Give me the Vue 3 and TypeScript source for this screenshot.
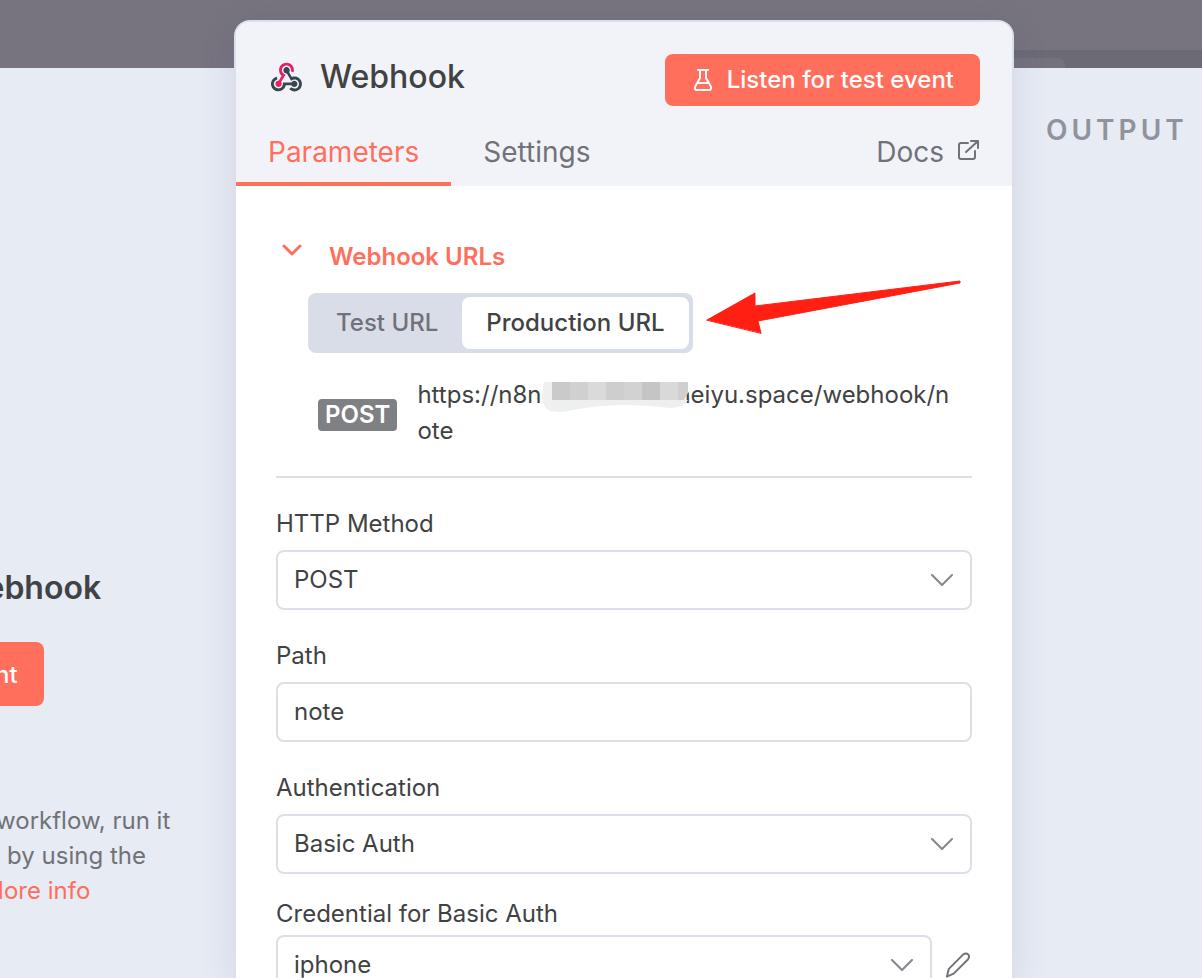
<script setup lang="ts">
import { ref } from 'vue'

type UrlKind = 'test' | 'production'

const urlKind = ref<UrlKind>('production')
const urlOptions: { value: UrlKind; label: string }[] = [
  { value: 'test', label: 'Test URL' },
  { value: 'production', label: 'Production URL' },
]

const activeTab = ref('Parameters')
const tabs = ['Parameters', 'Settings']

const method = ref('POST')
const path = ref('note')
const auth = ref('Basic Auth')
const credential = ref('iphone')
</script>

<template>
  <div class="page">
    <div class="backdrop">
      <div class="canvas-strip"><span class="canvas-tab"></span></div>
    </div>

    <aside class="input-panel">
      <div class="trigger">
        <h2>Pull in events from Webhook</h2>
        <button type="button" class="primary large">
          <svg class="flask" viewBox="0 0 20 24" aria-hidden="true">
            <path d="M5 2h10M7 2v8L2.300 18.300C1.200 20.300 2.200 22 4.300 22h11.400c2.100 0 3.100-1.700 2-3.700L13 10V2M5 15h10" />
          </svg>
          Listen for test event
        </button>
        <p>
          Once you’ve finished building your workflow, run it<br />
          without having to click this button by using the<br />
          production webhook URL. <a href="#">More info</a>
        </p>
      </div>
    </aside>

    <main class="modal">
      <header class="head">
        <div class="title-row">
          <svg class="logo" viewBox="0 0 256 239" aria-hidden="true">
            <path fill="#ea1e63" d="M119.54 100.503c-10.61 17.836-20.775 35.108-31.152 52.25-2.665 4.401-3.984 7.986-1.855 13.58 5.878 15.454-2.414 30.493-17.998 34.575-14.697 3.851-29.016-5.808-31.932-21.543-2.584-13.927 8.224-27.58 23.58-29.757 1.286-.184 2.6-.205 4.762-.367l23.358-39.168C73.612 95.465 64.868 78.39 66.803 57.23c1.368-14.957 7.25-27.883 18-38.477 20.59-20.288 52.002-23.573 76.246-8.001 23.284 14.958 33.948 44.094 24.858 69.031-6.854-1.858-13.756-3.732-21.343-5.79 2.854-13.865.743-26.315-8.608-36.981-6.178-7.042-14.106-10.733-23.12-12.093-18.072-2.73-35.815 8.88-41.08 26.618-5.976 20.13 3.069 36.575 27.784 48.967z" />
            <path fill="#37474f" d="M149.841 79.41c7.475 13.187 15.065 26.573 22.587 39.836 38.02-11.763 66.686 9.284 76.97 31.817 12.422 27.219 3.93 59.457-20.465 76.25-25.04 17.238-56.707 14.293-78.892-7.851 5.654-4.733 11.336-9.487 17.407-14.566 21.912 14.192 41.077 13.524 55.305-3.282 12.133-14.337 11.87-35.714-.615-49.75-14.408-16.197-33.707-16.691-57.035-1.143-9.677-17.168-19.522-34.199-28.893-51.491-3.16-5.828-6.648-9.21-13.77-10.443-11.893-2.062-19.571-12.275-20.032-23.717-.453-11.316 6.214-21.545 16.634-25.53 10.322-3.949 22.435-.762 29.378 8.014 5.674 7.17 7.477 15.24 4.491 24.083-.83 2.466-1.905 4.852-3.07 7.774z" />
            <path fill="#37474f" d="M167.707 187.21h-45.77c-4.387 18.044-13.863 32.612-30.19 41.876-12.693 7.2-26.373 9.641-40.933 7.29-26.808-4.323-48.728-28.456-50.658-55.63-2.184-30.784 18.975-58.147 47.178-64.293 1.947 7.071 3.915 14.21 5.862 21.264-25.876 13.202-34.832 29.836-27.59 50.636 6.375 18.304 24.484 28.337 44.147 24.457 20.08-3.962 30.204-20.65 28.968-47.432 19.036 0 38.088-.197 57.126.097 7.434.117 13.173-.654 18.773-7.208 9.22-10.784 26.191-9.811 36.121.374 10.148 10.409 9.662 27.157-1.077 37.127-10.361 9.62-26.73 9.106-36.424-1.26-1.992-2.136-3.562-4.673-5.533-7.298z" />
          </svg>
          <h1>Webhook</h1>
          <button type="button" class="primary">
            <svg class="flask" viewBox="0 0 20 24" aria-hidden="true">
              <path d="M5 2h10M7 2v8L2.300 18.300C1.200 20.300 2.200 22 4.300 22h11.400c2.100 0 3.100-1.700 2-3.700L13 10V2M5 15h10" />
            </svg>
            Listen for test event
          </button>
        </div>
        <nav class="tabs">
          <button
            v-for="tab in tabs"
            :key="tab"
            type="button"
            class="tab"
            :class="{ active: activeTab === tab }"
            @click="activeTab = tab"
          >
            {{ tab }}
          </button>
          <a class="tab docs" href="#">
            Docs
            <svg class="external" viewBox="0 0 22 22" aria-hidden="true">
              <path d="M10 4H3a2 2 0 0 0-2 2v12a2 2 0 0 0 2 2h12a2 2 0 0 0 2-2v-6M13 2h7v7M20 2L8 13" />
            </svg>
          </a>
        </nav>
      </header>

      <section class="body">
        <button type="button" class="section-title">
          <svg class="caret" viewBox="0 0 20 12" aria-hidden="true"><path d="M2 2l8 8 8-8" /></svg>
          Webhook URLs
        </button>

        <div class="switch-row">
          <div class="switch">
            <button
              v-for="option in urlOptions"
              :key="option.value"
              type="button"
              :class="{ active: urlKind === option.value }"
              @click="urlKind = option.value"
            >
              {{ option.label }}
            </button>
          </div>
          <svg class="arrow" viewBox="0 0 256 56" aria-hidden="true">
            <path d="M1 40L49 13 49 26 254 1 254 3 52 41 55 53Z" />
          </svg>
        </div>

        <div class="url-row">
          <span class="badge">POST</span>
          <div class="url">https://n8n.<svg class="mosaic" viewBox="0 0 146 30" aria-hidden="true">
              <path fill="#f0f0f0" d="M2 0h8v30q-8-3-10-12Q0 8 2 0z" />
              <path fill="#eeefef" d="M10 18h136q-5 8-18 8-24-3-50-3-30 1-52 6-9 2-16 0z" />
              <path fill="#cacaca" d="M10 0h18v18H10z" />
              <path fill="#d0d0d0" d="M28 0h18v18H28z" />
              <path fill="#dadada" d="M46 0h18v18H46z" />
              <path fill="#cecece" d="M64 0h18v18H64z" />
              <path fill="#d2d2d2" d="M82 0h18v18H82z" />
              <path fill="#c5c5c5" d="M100 0h18v18h-18z" />
              <path fill="#d9d9d9" d="M118 0h18v18h-18z" />
              <path fill="#cfcfcf" d="M136 0h10v11l-4 7h-6z" />
            </svg>heiyu.space/webhook/note</div>
        </div>

        <hr />

        <div class="field">
          <label for="method">HTTP Method</label>
          <div class="control">
            <select id="method" v-model="method">
              <option>POST</option>
            </select>
            <svg class="chevron" viewBox="0 0 22 12" aria-hidden="true"><path d="M1 1l10 10L21 1" /></svg>
          </div>
        </div>

        <div class="field">
          <label for="path">Path</label>
          <div class="control"><input id="path" v-model="path" type="text" /></div>
        </div>

        <div class="field">
          <label for="auth">Authentication</label>
          <div class="control">
            <select id="auth" v-model="auth">
              <option>Basic Auth</option>
            </select>
            <svg class="chevron" viewBox="0 0 22 12" aria-hidden="true"><path d="M1 1l10 10L21 1" /></svg>
          </div>
        </div>

        <div class="field credential">
          <label for="credential">Credential for Basic Auth</label>
          <div class="credential-row">
            <div class="control">
              <select id="credential" v-model="credential">
                <option>iphone</option>
              </select>
              <svg class="chevron" viewBox="0 0 22 12" aria-hidden="true"><path d="M1 1l10 10L21 1" /></svg>
            </div>
            <button type="button" class="edit" aria-label="Edit credential">
              <svg viewBox="0 0 28 28" aria-hidden="true">
                <path d="M2 26l2-8L19 3q3-2 5 0t0 5L9 23z" />
              </svg>
            </button>
          </div>
        </div>
      </section>
    </main>

    <aside class="output-panel"><h2>OUTPUT</h2></aside>
  </div>
</template>

<style>
body {
  margin: 0;
}
</style>

<style scoped>
.page {
  --accent: #ff6f5c;
  --line: #dbdfe9;
  --panel: #e6ebf4;
  --dark: #414244;
  --mid: #717277;
  display: grid;
  grid-template-columns: minmax(0, 234fr) minmax(0, 780fr) minmax(0, 188fr);
  grid-template-rows: 68px minmax(0, 1fr);
  height: 100vh;
  overflow: hidden;
  background: var(--panel);
  color: var(--dark);
  font: 24px/36px Inter, "Liberation Sans", sans-serif;
}
.page * {
  box-sizing: border-box;
}
h1,
h2,
p {
  margin: 0;
}
button,
input,
select {
  margin: 0;
  border: 0;
  background: none;
  color: inherit;
  font: inherit;
}
a {
  color: var(--accent);
  text-decoration: none;
}
svg {
  flex: none;
  fill: none;
  stroke-linecap: round;
  stroke-linejoin: round;
}

.backdrop {
  display: flex;
  grid-area: 1 / 1 / 2 / 4;
  align-items: flex-end;
  justify-content: flex-end;
  background: #77747f;
}
.canvas-strip {
  display: flex;
  align-items: flex-end;
  width: 16%;
  height: 18px;
  background: #6b6a75;
}
.canvas-tab {
  width: 55px;
  height: 10px;
  border-radius: 0 8px 0 0;
  background: #74727d;
}

.input-panel {
  display: flex;
  grid-area: 2 / 1;
  justify-content: flex-end;
  padding: 500px 31px 0 0;
  overflow: hidden;
}
.trigger {
  display: flex;
  flex: none;
  flex-direction: column;
  align-items: center;
  width: 640px;
  color: var(--mid);
  line-height: 35px;
  text-align: center;
}
.trigger h2 {
  padding-right: 4px;
  color: var(--dark);
  font-size: 32px;
  font-weight: 600;
  line-height: 40px;
}
.trigger .large {
  height: 64px;
  margin: 34px 0 97px;
  padding-left: 32px;
}
.trigger a {
  margin-left: 6px;
}

.primary {
  display: flex;
  align-items: center;
  gap: 14px;
  height: 52px;
  padding: 0 26px;
  border-radius: 8px;
  background: var(--accent);
  color: #fff;
  font-weight: 500;
  white-space: nowrap;
}

.modal {
  position: relative;
  grid-area: 1 / 2 / 3 / 3;
  margin-top: 20px;
  overflow: hidden;
  border: 2px solid var(--line);
  border-bottom: 0;
  border-radius: 16px 16px 0 0;
  background: #fff;
  box-shadow: 0 8px 36px rgba(60, 66, 100, 0.12);
}
.head {
  background: #f2f3f9;
}
.title-row {
  display: flex;
  align-items: center;
  padding: 32px 32px 0 35px;
}
.logo {
  width: 31px;
  height: 30px;
  margin-bottom: 6px;
}
.title-row h1 {
  margin: 0 auto 6px 18px;
  font-size: 32px;
  font-weight: 500;
  line-height: 40px;
}
.flask {
  width: 20px;
  height: 24px;
  margin-left: 2px;
  stroke: #fff;
  stroke-width: 2;
}
.tabs {
  display: flex;
  height: 80px;
}
.tab {
  display: flex;
  align-items: center;
  padding: 16px 32px 0;
  border-bottom: 4px solid transparent;
  color: var(--mid);
  font-size: 28px;
  line-height: 36px;
}
.tab.active {
  border-color: var(--accent);
  color: var(--accent);
}
.docs {
  gap: 14px;
  margin-left: auto;
}
.external {
  width: 22px;
  height: 22px;
  margin-bottom: 4px;
  stroke: var(--mid);
  stroke-width: 2;
}

.body {
  padding: 53px 40px 0;
}
.section-title {
  display: flex;
  align-items: center;
  gap: 27px;
  padding: 0 6px;
  color: var(--accent);
  font-weight: 600;
}
.caret {
  width: 20px;
  height: 12px;
  margin-bottom: 14px;
  stroke: var(--accent);
  stroke-width: 3;
}
.switch-row {
  display: flex;
  align-items: flex-start;
  gap: 13px;
  margin: 18px 0 0 32px;
}
.switch {
  display: flex;
  flex: none;
  padding: 4px;
  border-radius: 8px;
  background: #d9dde8;
}
.switch button {
  height: 52px;
  padding: 0 24px;
  border-radius: 8px;
  color: var(--mid);
  font-weight: 500;
}
.switch .active {
  background: #fff;
  color: var(--dark);
}
.arrow {
  width: 256px;
  height: 56px;
  margin-top: -13px;
  fill: #ff2013;
  stroke: #ff2013;
  stroke-width: 1;
}

.url-row {
  display: flex;
  align-items: center;
  gap: 20px;
  padding: 24px 16px 0 42px;
}
.badge {
  flex: none;
  margin-top: 4px;
  padding: 0 7px;
  border-radius: 4px;
  background: #7f8084;
  color: #fff;
  font-weight: 600;
  line-height: 32px;
}
.url {
  word-break: break-all;
}
.mosaic {
  position: relative;
  width: 146px;
  height: 30px;
  margin: -3px -12px -5px -6px;
  vertical-align: middle;
}
hr {
  height: 2px;
  margin: 27px 0 28px;
  border: 0;
  background: var(--line);
}

.field {
  display: flex;
  flex-direction: column;
  gap: 8px;
  margin-bottom: 28px;
}
.credential {
  gap: 3px;
  margin-top: -6px;
}
.control {
  display: grid;
  flex: 1;
  align-items: center;
}
.control > * {
  grid-area: 1 / 1;
}
.control input,
.control select {
  width: 100%;
  height: 60px;
  padding: 0 16px;
  appearance: none;
  border: 2px solid var(--line);
  border-radius: 8px;
  background: #fff;
}
.control input {
  padding-bottom: 2px;
}
.chevron {
  justify-self: end;
  width: 22px;
  height: 12px;
  margin-right: 19px;
  stroke: #85878e;
  stroke-width: 2;
  pointer-events: none;
}
.credential-row {
  display: flex;
  align-items: center;
  gap: 13px;
}
.edit {
  display: flex;
  padding: 0;
}
.edit svg {
  width: 27px;
  height: 28px;
  stroke: var(--mid);
  stroke-width: 2;
}

.output-panel {
  grid-area: 2 / 3;
  padding: 44px 0 0 32px;
  overflow: hidden;
}
.output-panel h2 {
  color: #90939b;
  font-size: 28px;
  font-weight: 600;
  letter-spacing: 4px;
}
</style>
